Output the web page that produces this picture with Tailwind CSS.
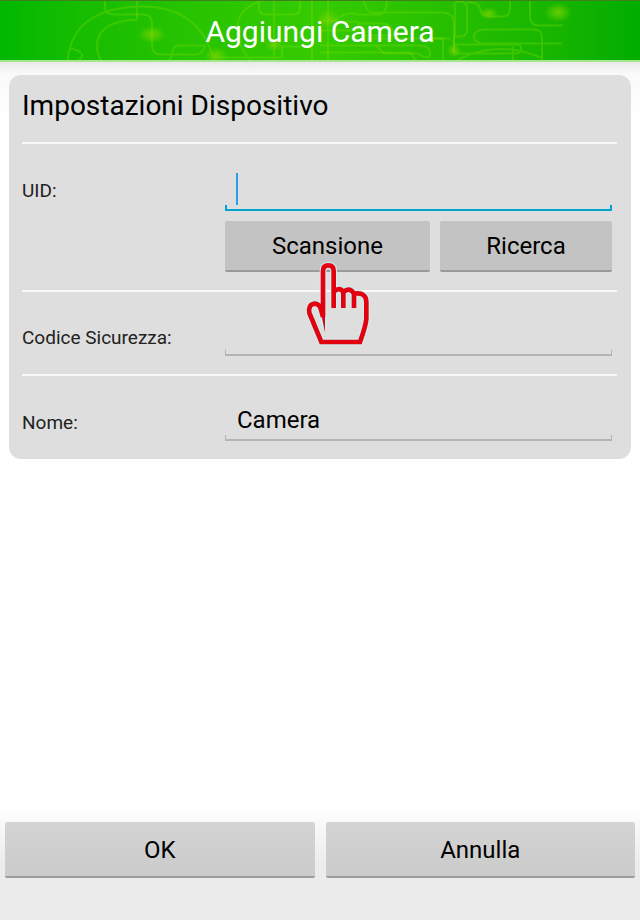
<!DOCTYPE html>
<html lang="it">
<head>
  <meta charset="UTF-8">
  <meta name="viewport" content="width=device-width, initial-scale=1.0">
  <title>Aggiungi Camera</title>
  <script src="https://cdn.jsdelivr.net/npm/@tailwindcss/browser@4"></script>
</head>
<body class="min-h-screen flex flex-col bg-white font-['Roboto',sans-serif] text-black">

  <header class="relative h-[62px] overflow-hidden border-t border-t-[#3f7f1c] border-b-2 border-b-[#a5e58b] bg-linear-to-r from-[#00b800] via-[#35cb00] to-[#00ad00]">
    <!-- circuit pattern -->
    <svg class="absolute inset-0 w-full h-full" viewBox="0 0 640 60" preserveAspectRatio="xMidYMid slice" fill="none" stroke="#7be000" stroke-opacity=".32" stroke-width="2" aria-hidden="true">
      <defs>
        <radialGradient id="glow">
          <stop offset="0" stop-color="#7ad400" stop-opacity=".8"/>
          <stop offset="1" stop-color="#7ad400" stop-opacity="0"/>
        </radialGradient>
      </defs>
      <path d="M105 0v6q0 8 8 8h30q9 0 9 9v22q0 9 9 9h35q7 0 9-9h-27q-5 0-6 10l-4 6"/>
      <path d="M137 0v19q-40 2-40 26 0 8 4 15M68 60C70 20 105 6 142 6c36 0 62 16 72 54M78 60c8-4 4-10-8-12"/>
      <path d="M262 0c-30 10-32 34-12 60M259 0v7q0 7 7 7h28q6 0 6-7V0M274 0v60M312 0v60M328 0v60M214 57h68V46h28"/>
      <path d="M320 20h15q12-10 22-6h24q6-3 6-14M363 0l4 9q2 3 7 3h68q12 0 12 12v27M327 21h30q6 6 6 14h30q0-12-12-12h-24"/>
      <path d="M454 53V36M454 36h6q7 0 7-7V8q0-7-7-7t-5 7v29M467 2q12-2 14 9 3 5 9 5h13q7 0 7-9V0M320 45h100q10 0 10 8t-12 0h-34l-8-8M430 38h13v22"/>
      <path d="M530 0v16q0 9 9 9h24M542 60V37q0-8-8-8h-48q-12 0-12 7t12 7h76M457 60q40-22 86-2M454 53h62q5 0 5-5t-5-4h-62M513 60V46M320 52h90l6 8M320 30h45v8h86"/>
      <g fill="url(#glow)" stroke="none">
        <ellipse cx="152" cy="34" rx="14" ry="9"/>
        <ellipse cx="216" cy="55" rx="12" ry="8"/>
        <ellipse cx="274" cy="44" rx="9" ry="7"/>
        <ellipse cx="328" cy="19" rx="12" ry="10"/>
        <ellipse cx="454" cy="50" rx="7" ry="7"/>
        <ellipse cx="489" cy="13" rx="10" ry="6"/>
        <ellipse cx="558" cy="12" rx="14" ry="10"/>
      </g>
    </svg>
    <h1 class="relative text-center text-[30px] leading-[62px] text-white">Aggiungi Camera</h1>
  </header>

  <main class="flex-1 bg-linear-to-b from-[#e9e9e9] via-[#fafafa] via-[12px] to-white to-[60px] px-[9px] pt-[13px] pb-8">
    <form id="camera" class="rounded-xl bg-[#dedede] pl-[13px] pr-[14px]">
      <h2 class="border-b-2 border-[#f8f8f8] pb-[5px] text-[28px] leading-[62px]">Impostazioni Dispositivo</h2>

      <div class="border-b-2 border-[#f8f8f8] pt-[19px] pb-[18px] pr-[5px]">
        <div class="flex items-end">
          <label for="uid" class="w-[203px] shrink-0 text-[19px] leading-10 text-[#222]">UID:</label>
          <div class="flex-1">
            <div class="flex h-[42px] items-end pl-[11px]">
              <span class="h-8 w-0.5 bg-[#2ba0ea]"></span>
              <input id="uid" type="text" class="h-10 min-w-0 flex-1 text-2xl outline-none">
            </div>
            <div class="h-[6px] border-2 border-t-0 border-[#04a3cf]"></div>
          </div>
        </div>
        <div class="mt-[10px] ml-[203px] flex gap-[10px]">
          <div class="relative flex-[205]">
            <button type="button" class="h-[51px] w-full rounded-xs border-b-2 border-[#999] bg-[#c3c3c3] text-2xl">Scansione</button>
            <!-- pointing hand -->
            <svg class="pointer-events-none absolute left-1/2 top-[41px] z-10 -ml-[23px] h-[85px] w-[65px]" viewBox="45 35 195 255" fill="none" aria-hidden="true">
              <path stroke="#cdeef0" stroke-width="20" d="M104 232L99 180V61Q99 45 115 45T131 61V173M131 124Q150 108 160 126V173M160 126Q178 108 192 130V173M192 130Q229 124 229 156V205Q228 225 210 275H94L58 188Q54 162 74 160Q88 160 93 178L104 232"/>
              <path stroke="#e3000f" stroke-width="14" d="M99 200V61Q99 45 115 45T131 61V173M131 124Q150 108 160 126V173M160 126Q178 108 192 130V173M192 130Q229 124 229 156V205Q228 225 210 275H94L58 188Q54 162 74 160Q88 160 93 178L99 200"/>
              <path fill="#e3000f" d="M91 178L105 246V178Z"/>
            </svg>
          </div>
          <button type="button" class="h-[51px] flex-[172] rounded-xs border-b-2 border-[#999] bg-[#c3c3c3] text-2xl">Ricerca</button>
        </div>
      </div>

      <div class="flex items-end border-b-2 border-[#f8f8f8] pt-4 pb-[18px] pr-[5px]">
        <label for="codice" class="w-[203px] shrink-0 text-[19px] leading-9 text-[#222]">Codice Sicurezza:</label>
        <div class="flex-1">
          <input id="codice" type="password" class="block h-[42px] w-full px-3 pt-3 text-2xl outline-none">
          <div class="h-[6px] border border-t-0 border-b-2 border-[#b4b4b4]"></div>
        </div>
      </div>

      <div class="flex items-end pt-[17px] pb-[18px] pr-[5px]">
        <label for="nome" class="w-[203px] shrink-0 text-[19px] leading-9 text-[#222]">Nome:</label>
        <div class="flex-1">
          <input id="nome" type="text" value="Camera" class="block h-[42px] w-full px-3 pt-3 text-2xl outline-none">
          <div class="h-[6px] border border-t-0 border-b-2 border-[#b4b4b4]"></div>
        </div>
      </div>
    </form>
  </main>

  <footer class="flex gap-[11px] bg-linear-to-b from-white to-[#ececec] to-50% px-[5px] pt-4 pb-[42px]">
    <button type="submit" form="camera" class="h-14 flex-1 rounded-xs border-b-2 border-[#9c9c9c] bg-linear-to-b from-[#d4d4d4] to-[#cbcbcb] pt-0.5 text-2xl">OK</button>
    <button type="button" class="h-14 flex-1 rounded-xs border-b-2 border-[#9c9c9c] bg-linear-to-b from-[#d4d4d4] to-[#cbcbcb] pt-0.5 text-2xl">Annulla</button>
  </footer>

</body>
</html>
